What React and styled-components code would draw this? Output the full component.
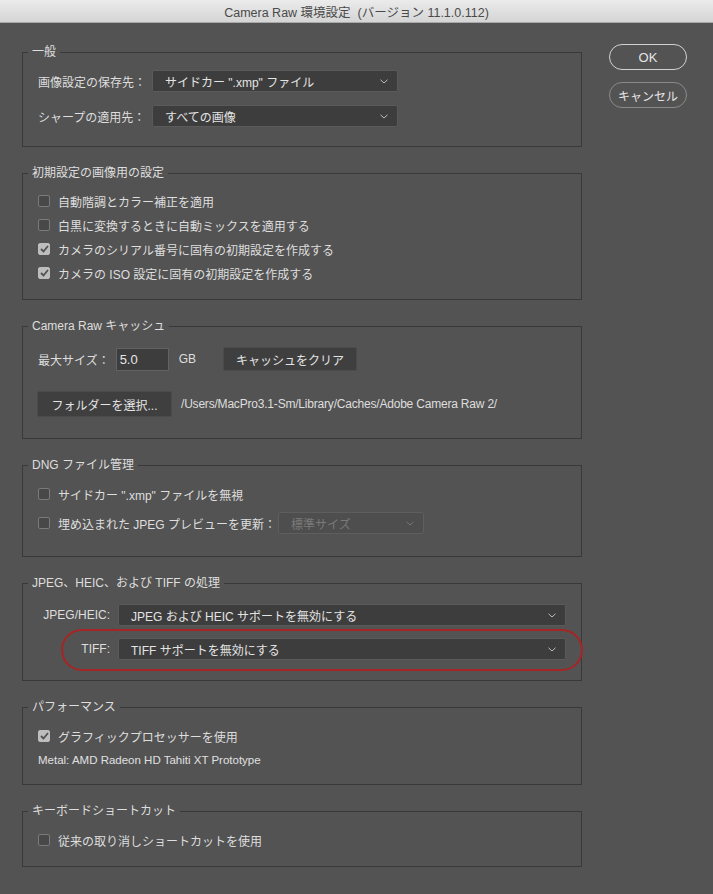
import React from 'react';
import styled, { createGlobalStyle } from 'styled-components';

const GlobalStyle = createGlobalStyle`
    html, body {
        margin: 0;
        padding: 0;
        background: #535353;
    }
    body {
        font-family: "Liberation Sans", "Noto Sans CJK JP", sans-serif;
        font-size: 12px;
        color: #dedede;
    }
`;

const Window = styled.div`
    width: 713px;
    height: 894px;
    background: #535353;
    overflow: hidden;
`;

const TitleBar = styled.div`
    height: 22px;
    background: linear-gradient(#ebebeb, #d5d5d5);
    border-bottom: 1px solid #a9a9a9;
    display: flex;
    align-items: center;
    justify-content: center;
    color: #4a4a4a;
    font-size: 12.5px;
    white-space: pre;
`;

const Body = styled.div`
    display: flex;
    align-items: flex-start;
    padding: 21px 0 0 22px;
`;

const Main = styled.div`
    width: 560px;
    display: flex;
    flex-direction: column;
    gap: 18px;
`;

const Side = styled.div`
    margin-left: 27px;
    display: flex;
    flex-direction: column;
    gap: 12px;
`;

const PillButton = styled.button`
    width: 78px;
    height: 26px;
    border-radius: 13px;
    background: transparent;
    border: 1.5px solid ${p => (p.$primary ? '#d2d2d2' : '#8a8a8a')};
    color: #e6e6e6;
    font-family: inherit;
    font-size: ${p => (p.$primary ? 13 : 12)}px;
    padding: 0;
`;

const Group = styled.fieldset`
    margin: 0;
    min-width: 0;
    border: 1px solid #393939;
    padding: ${p => p.$pt}px 15px ${p => p.$pb}px;
    display: flex;
    flex-direction: column;
    gap: ${p => p.$gap}px;
`;

const Legend = styled.legend`
    padding: 0 4px;
    margin-left: -10px;
    line-height: 16px;
    font-size: 12px;
    color: #dedede;
`;

const Row = styled.div`
    display: flex;
    align-items: center;
    height: ${p => p.$h || 22}px;
    position: relative;
`;

const Label = styled.span`
    width: ${p => (p.$w ? `${p.$w}px` : 'auto')};
    text-align: ${p => (p.$right ? 'right' : 'left')};
    margin-right: ${p => p.$mr ?? 0}px;
    margin-left: ${p => p.$ml ?? 0}px;
    white-space: nowrap;
    flex-shrink: 0;
`;

const SelectBox = styled.div`
    box-sizing: border-box;
    width: ${p => (p.$w ? `${p.$w}px` : 'auto')};
    flex: ${p => (p.$w ? 'none' : 1)};
    margin-left: ${p => p.$ml ?? 0}px;
    height: 22px;
    background: ${p => (p.$disabled ? '#4e4e4e' : '#3d3d3d')};
    border: 1px solid ${p => (p.$disabled ? '#5e5e5e' : '#5a5a5a')};
    border-radius: 2px;
    display: flex;
    align-items: center;
    justify-content: space-between;
    padding: 0 9px 0 12px;
    color: ${p => (p.$disabled ? '#7a7a7a' : '#e4e4e4')};
    font-size: 12px;
    white-space: nowrap;
`;

const Chevron = ({ dim }) => (
    <svg width="8" height="5" viewBox="0 0 8 5">
        <polyline points="0.5,0.8 4,4 7.5,0.8" fill="none" stroke={dim ? '#777' : '#bdbdbd'} strokeWidth="1" />
    </svg>
);

const Select = ({ value, width, disabled, offset }) => (
    <SelectBox $w={width} $disabled={disabled} $ml={offset}>
        <span>{value}</span>
        <Chevron dim={disabled} />
    </SelectBox>
);

const CheckBox = styled.span`
    box-sizing: border-box;
    width: 12px;
    height: 12px;
    border-radius: 2px;
    flex-shrink: 0;
    margin-right: 8px;
    background: ${p => (p.$on ? '#bdbdbd' : '#484848')};
    border: 1px solid ${p => (p.$on ? '#bdbdbd' : '#7a7a7a')};
    display: flex;
    align-items: center;
    justify-content: center;
`;

const Check = ({ on, children }) => (
    <Row>
        <CheckBox $on={on}>
            {on && (
                <svg width="9" height="8" viewBox="0 0 9 8">
                    <polyline points="1,4 3.5,6.5 8,1" fill="none" stroke="#505050" strokeWidth="1.8" />
                </svg>
            )}
        </CheckBox>
        <span>{children}</span>
    </Row>
);

const CheckRow = styled.div`
    height: 24px;
    display: flex;
    align-items: center;
`;

const TextInput = styled.div`
    box-sizing: border-box;
    width: 53px;
    height: 23px;
    background: #3d3d3d;
    border: 1px solid #626262;
    padding: 0 3px;
    display: flex;
    align-items: center;
    color: #e6e6e6;
    font-size: 13px;
    flex-shrink: 0;
`;

const FlatButton = styled.button`
    box-sizing: border-box;
    width: ${p => p.$w}px;
    height: ${p => p.$h || 24}px;
    background: #3f3f3f;
    border: 1px solid #4b4b4b;
    border-radius: 2px;
    color: #e4e4e4;
    font-family: inherit;
    font-size: 12px;
    padding: 0;
    margin-left: ${p => p.$ml ?? 0}px;
    flex-shrink: 0;
`;

const PathText = styled.span`
    margin-left: 9px;
    font-size: 12px;
    letter-spacing: -0.2px;
    white-space: nowrap;
`;

const SmallText = styled.div`
    height: 16px;
    line-height: 16px;
    font-size: 11.5px;
    color: #e0e0e0;
`;

const Highlight = styled.div`
    position: absolute;
    left: 23px;
    right: -17px;
    top: -9px;
    bottom: -11px;
    border: 2px solid #a82424;
    border-radius: 22px;
    pointer-events: none;
`;

const App = () => {
    return (
        <Window>
            <GlobalStyle />
            <TitleBar>Camera Raw 環境設定  (バージョン 11.1.0.112)</TitleBar>
            <Body>
                <Main>
                    <Group $pt={10} $pb={19} $gap={13}>
                        <Legend>一般</Legend>
                        <Row>
                            <Label $w={114}>画像設定の保存先：</Label>
                            <Select value={'サイドカー ".xmp" ファイル'} width={246} />
                        </Row>
                        <Row>
                            <Label $w={114}>シャープの適用先：</Label>
                            <Select value="すべての画像" width={246} />
                        </Row>
                    </Group>

                    <Group $pt={8} $pb={14} $gap={0}>
                        <Legend>初期設定の画像用の設定</Legend>
                        <CheckRow><Check on={false}>自動階調とカラー補正を適用</Check></CheckRow>
                        <CheckRow><Check on={false}>白黒に変換するときに自動ミックスを適用する</Check></CheckRow>
                        <CheckRow><Check on>カメラのシリアル番号に固有の初期設定を作成する</Check></CheckRow>
                        <CheckRow><Check on>カメラの ISO 設定に固有の初期設定を作成する</Check></CheckRow>
                    </Group>

                    <Group $pt={13} $pb={21} $gap={20}>
                        <Legend>Camera Raw キャッシュ</Legend>
                        <Row $h={24}>
                            <Label $mr={6}>最大サイズ：</Label>
                            <TextInput>5.0</TextInput>
                            <Label $ml={10}>GB</Label>
                            <FlatButton $w={134} $ml={27}>キャッシュをクリア</FlatButton>
                        </Row>
                        <Row $h={26}>
                            <FlatButton $w={135} $h={26} $ml={-1}>フォルダーを選択...</FlatButton>
                            <PathText>/Users/MacPro3.1-Sm/Library/Caches/Adobe Camera Raw 2/</PathText>
                        </Row>
                    </Group>

                    <Group $pt={10} $pb={22} $gap={7}>
                        <Legend>DNG ファイル管理</Legend>
                        <Check on={false}>サイドカー ".xmp" ファイルを無視</Check>
                        <Row>
                            <Check on={false}>埋め込まれた JPEG プレビューを更新：</Check>
                            <Select value="標準サイズ" width={146} disabled offset={2} />
                        </Row>
                    </Group>

                    <Group $pt={13} $pb={20} $gap={12}>
                        <Legend>JPEG、HEIC、および TIFF の処理</Legend>
                        <Row>
                            <Label $w={72} $right $mr={8}>JPEG/HEIC:</Label>
                            <Select value="JPEG および HEIC サポートを無効にする" />
                        </Row>
                        <Row>
                            <Label $w={72} $right $mr={8}>TIFF:</Label>
                            <Select value="TIFF サポートを無効にする" />
                            <Highlight />
                        </Row>
                    </Group>

                    <Group $pt={10} $pb={16} $gap={5}>
                        <Legend>パフォーマンス</Legend>
                        <Check on>グラフィックプロセッサーを使用</Check>
                        <SmallText>Metal: AMD Radeon HD Tahiti XT Prototype</SmallText>
                    </Group>

                    <Group $pt={10} $pb={15} $gap={0}>
                        <Legend>キーボードショートカット</Legend>
                        <Check on={false}>従来の取り消しショートカットを使用</Check>
                    </Group>
                </Main>
                <Side>
                    <PillButton $primary>OK</PillButton>
                    <PillButton>キャンセル</PillButton>
                </Side>
            </Body>
        </Window>
    );
};

export default App;
